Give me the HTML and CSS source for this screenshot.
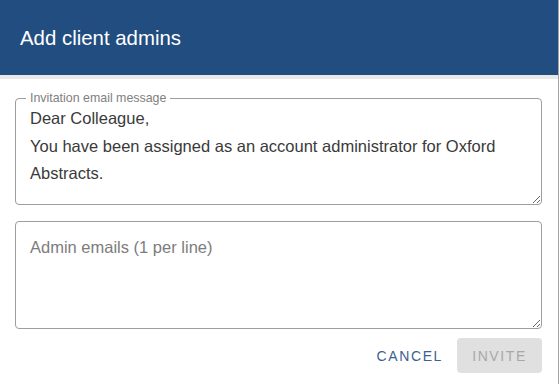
FILE: index.html
```html
<!DOCTYPE html>
<html lang="en">

<head>
    <meta charset="UTF-8">
    <title>Add client admins</title>
    <link rel="stylesheet" href="styles.css">
</head>

<body>
    <div class="dialog">
        <div class="dialog-title">Add client admins</div>
        <div class="dialog-content">
            <fieldset class="field">
                <legend>Invitation email message</legend>
                <textarea class="message" rows="3">Dear Colleague,
You have been assigned as an account administrator for Oxford Abstracts.</textarea>
            </fieldset>
            <div class="field plain">
                <textarea class="emails" placeholder="Admin emails (1 per line)"></textarea>
            </div>
            <div class="actions">
                <button class="btn-text">Cancel</button>
                <button class="btn-disabled" disabled>Invite</button>
            </div>
        </div>
    </div>
</body>

</html>
```

FILE: styles.css
```css
body {
    margin: 0;
    padding: 0;
    font-family: "Liberation Sans", Arial, sans-serif;
    background: white;
}

.dialog {
    width: 559px;
    height: 384px;
    border-right: 1px solid #a3a3a3;
    box-sizing: border-box;
}

.dialog-title {
    height: 75px;
    background-color: #214d80;
    color: white;
    font-size: 20.4px;
    line-height: 76px;
    padding-left: 20px;
    border-bottom: 4px solid #e8e8e8;
}

.dialog-content {
    padding: 12px 16px 0 15px;
}

/* outlined text fields */
.field {
    margin: 0;
    padding: 0;
    border: 1px solid #9e9e9e;
    border-radius: 4px;
    display: flex;
}

.field legend {
    font-size: 12.4px;
    color: #808080;
    margin-left: 10px;
    padding: 0 4px 0 4px;
}

.field textarea {
    flex: 1;
    border: none;
    outline: none;
    font-family: "Liberation Sans", Arial, sans-serif;
    font-size: 16.5px;
    line-height: 27.5px;
    color: #3a3a3a;
    padding: 0 14px;
    margin: 0;
    background: transparent;
}

.message {
    height: 99px;
    padding-top: 0;
}

.plain {
    margin-top: 16px;
}

.emails {
    height: 106px;
    padding-top: 12px !important;
    box-sizing: border-box;
}

.emails::placeholder {
    color: #7c7c7c;
}

.actions {
    display: flex;
    justify-content: flex-end;
    align-items: center;
    gap: 6px;
    margin-top: 9px;
}

.btn-text,
.btn-disabled {
    font-family: "Liberation Sans", Arial, sans-serif;
    font-size: 14px;
    letter-spacing: 1.6px;
    text-transform: uppercase;
    border: none;
    border-radius: 4px;
    height: 35px;
    padding: 0 8px;
}

.btn-text {
    background: none;
    color: #3d5f92;
}

.btn-disabled {
    background-color: #e0e0e0;
    color: #a8a8a8;
    width: 85px;
}
```
